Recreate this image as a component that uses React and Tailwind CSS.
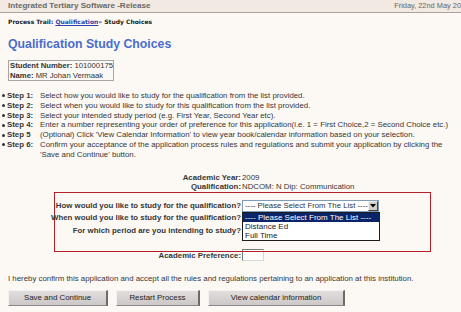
import React from "react";

const Bullet = () => (
  <span className="inline-block w-[3px] h-[3px] rounded-full bg-[#333] mr-[2px]" />
);

function Step({ label, children }) {
  return (
    <div className="flex">
      <div className="w-[38px] shrink-0 flex items-center self-start h-[9.8px] whitespace-nowrap">
        <Bullet />
        <b>{label}</b>
      </div>
      <div>{children}</div>
    </div>
  );
}

function Row({ label, children }) {
  return (
    <div className="flex items-center">
      <div className="w-[242px] shrink-0 flex justify-end pr-[1px] whitespace-nowrap font-bold">
        <span>{label}</span>
      </div>
      <div className="whitespace-nowrap">{children}</div>
    </div>
  );
}

function Btn({ children, w }) {
  return (
    <button
      className={
        "h-[16px] bg-gradient-to-b from-[#e2dede] to-[#cdc8c8] border border-t-[#f4f2f2] border-l-[#f4f2f2] border-r-[#6e6a6a] border-b-[#8a8686] border-r-2 text-[7.9px] text-[#222] " +
        w
      }
    >
      {children}
    </button>
  );
}

export default function App() {
  return (
    <div className="w-[461px] h-[312px] overflow-hidden bg-[#fcf9f5] text-[#363636] font-['Liberation_Sans',Arial,sans-serif] text-[7.85px] leading-[9.8px]">
      {/* header */}
      <div className="flex items-center h-[13px] bg-[#f1e9e2] border-b border-[#a8a4a0]">
        <div className="flex-1 pl-[8px] font-bold text-[8.1px] text-[#6a6a6a]">
          Integrated Tertiary Software -Release
        </div>
        <div className="whitespace-nowrap text-[7.4px] text-[#666]">Friday, 22nd May 20</div>
      </div>

      {/* process trail */}
      <div className="pl-[8px] mt-[4px] font-['DejaVu_Sans',Verdana,sans-serif] font-bold text-[6px] text-[#222] leading-[9px] whitespace-nowrap">
        Process Trail:{" "}
        <span className="text-[#2b3fa8] underline">Qualification</span>
        <span className="text-[#2b3fa8]">» </span>
        Study Choices
      </div>

      {/* heading */}
      <div className="pl-[8px] mt-[11px] font-bold text-[12.3px] leading-[14px] text-[#4a6ccc]">
        Qualification Study Choices
      </div>

      {/* student box */}
      <div className="ml-[8px] mt-[9px] w-[106px] h-[21px] border border-[#a8a6a4] bg-[#fbf9f6] px-[1px] text-[7.7px] leading-[9.5px] text-[#333] whitespace-nowrap">
        <div>
          <b>Student Number:</b> 101000175
        </div>
        <div>
          <b>Name:</b> MR Johan Vermaak
        </div>
      </div>

      {/* steps */}
      <div className="pl-[2px] mt-[10px]">
        <Step label="Step 1:">Select how you would like to study for the qualification from the list provided.</Step>
        <Step label="Step 2:">Select when you would like to study for this qualification from the list provided.</Step>
        <Step label="Step 3:">Select your intended study period (e.g. First Year, Second Year etc).</Step>
        <Step label="Step 4:">Enter a number representing your order of preference for this application(i.e. 1 = First Choice,2 = Second Choice etc.)</Step>
        <Step label="Step 5">(Optional) Click 'View Calendar Information' to view year book/calendar information based on your selection.</Step>
        <Step label="Step 6:">
          Confirm your acceptance of the application process rules and regulations and submit your application by clicking the
          <br />
          'Save and Continue' button.
        </Step>
      </div>

      {/* academic info */}
      <div className="mt-[13px] leading-[9px]">
        <Row label="Academic Year:">2009</Row>
        <Row label="Qualification:">NDCOM: N Dip: Communication</Row>
      </div>

      {/* red box */}
      <div className="relative ml-[54px] mt-[1px] w-[377px] h-[60px] border border-[#b3202a] pt-[7px]">
        <div className="flex items-center h-[12px]">
          <div className="w-[187px] shrink-0 flex justify-end pr-[1px] whitespace-nowrap font-bold">
            <span>How would you like to study for the qualification?</span>
          </div>
          <div className="w-[137px] h-[12px] border border-[#7f9db9] bg-white flex items-center text-[7.8px] text-[#333]">
            <span className="flex-1 pl-[2px] whitespace-nowrap overflow-hidden">---- Please Select From The List ----</span>
            <span className="w-[10px] h-[10px] bg-[#d4d0c8] border border-t-[#f0f0f0] border-l-[#f0f0f0] border-r-[#404040] border-b-[#404040] flex items-center justify-center">
              <svg width="6" height="4" viewBox="0 0 6 4">
                <path d="M0 0 L6 0 L3 3.5 Z" fill="#000" />
              </svg>
            </span>
          </div>
        </div>
        <div className="flex items-center h-[13px]">
          <div className="w-[187px] shrink-0 flex justify-end pr-[1px] whitespace-nowrap font-bold">
            <span>When would you like to study for the qualification?</span>
          </div>
        </div>
        <div className="flex items-center h-[13px]">
          <div className="w-[187px] shrink-0 flex justify-end pr-[1px] whitespace-nowrap font-bold">
            <span>For which period are you intending to study?</span>
          </div>
        </div>

        {/* open dropdown list */}
        <div className="absolute left-[187px] top-[19px] w-[138px] h-[29px] border border-[#1c1c1c] bg-white text-[8px] leading-[9px]">
          <div className="bg-[#0a246a] text-white pl-[2px] whitespace-nowrap">---- Please Select From The List ----</div>
          <div className="pl-[2px] text-[#222]">Distance Ed</div>
          <div className="pl-[2px] text-[#222]">Full Time</div>
        </div>
      </div>

      {/* preference */}
      <div className="flex items-center -mt-[3px]">
        <div className="w-[242px] shrink-0 flex justify-end pr-[1px] whitespace-nowrap font-bold pt-[2px]">
          <span>Academic Preference:</span>
        </div>
        <div className="w-[22px] h-[12px] border border-t-[#7a7a7a] border-l-[#7a7a7a] border-r-[#d8d8d8] border-b-[#d8d8d8] bg-white" />
      </div>

      {/* confirm */}
      <div className="pl-[8px] mt-[13px] whitespace-nowrap">
        I hereby confirm this application and accept all the rules and regulations pertaining to an application at this institution.
      </div>

      {/* buttons */}
      <div className="flex pl-[8px] mt-[7px] gap-[8px]">
        <Btn w="w-[100px]">Save and Continue</Btn>
        <Btn w="w-[84px]">Restart Process</Btn>
        <Btn w="w-[137px]">View calendar information</Btn>
      </div>
    </div>
  );
}
